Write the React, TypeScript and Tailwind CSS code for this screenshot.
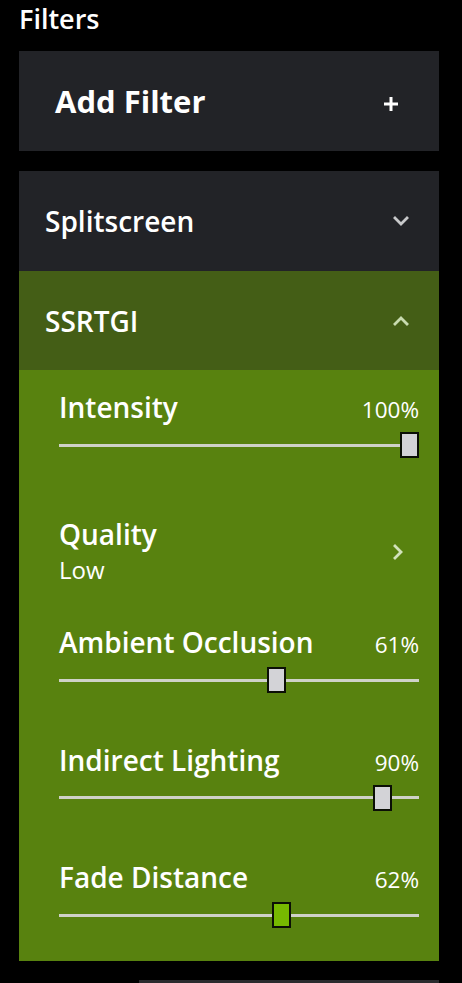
import type { ReactNode } from 'react'

const font = { fontFamily: '"Open Sans", "Noto Sans", sans-serif' }

type SliderRow = {
  label: string
  value: number
  pos?: number
  accent?: boolean
}

function Chevron({ dir }: { dir: 'up' | 'down' | 'right' }) {
  const d =
    dir === 'down'
      ? 'M2 2 L8 8 L14 2'
      : dir === 'up'
        ? 'M2 8 L8 2 L14 8'
        : 'M2 2 L8 8 L2 14'
  const w = dir === 'right' ? 10 : 16
  const h = dir === 'right' ? 16 : 10
  return (
    <svg width={w} height={h} viewBox={`0 0 ${w} ${h}`} fill="none">
      <path d={d} stroke="currentColor" strokeWidth="2.8" strokeLinecap="square" />
    </svg>
  )
}

function Slider({ label, value, pos, accent }: SliderRow) {
  const p = pos ?? value / 100
  return (
    <div className="h-[117.5px] pt-[21px] pl-[40px] pr-[20px]">
      <div className="flex items-baseline justify-between">
        <span className="text-[28px] leading-[32px] font-semibold text-white">{label}</span>
        <span className="text-[22.5px] leading-[32px] text-white">{value}%</span>
      </div>
      <div className="relative mt-[6px] h-[26px]">
        <div className="absolute left-0 right-0 top-[11.5px] h-[3px] bg-[#cfd2c8]" />
        <div
          className={
            'absolute top-0 h-[26px] w-[19px] border-2 border-[#0b0f06] ' +
            (accent ? 'bg-[#76b900]' : 'bg-[#d3d3d7]')
          }
          style={{ left: `calc(${p * 100}% - ${p * 19}px)` }}
        />
      </div>
    </div>
  )
}

function Card({ children, className }: { children: ReactNode; className: string }) {
  return <div className={'flex items-center justify-between ' + className}>{children}</div>
}

export default function App() {
  const rows: SliderRow[] = [
    { label: 'Ambient Occlusion', value: 61 },
    { label: 'Indirect Lighting', value: 90, pos: 0.92 },
    { label: 'Fade Distance', value: 62, pos: 0.625, accent: true },
  ]

  return (
    <div className="h-[983px] w-[462px] overflow-hidden bg-black" style={font}>
      <div className="pl-[19px] pr-[23px] pt-[1px]">
        <h1 className="text-[27px] leading-[36px] font-semibold text-white">Filters</h1>

        <Card className="mt-[14px] h-[100px] bg-[#222327] pl-[36px] pr-[40px]">
          <span className="text-[31px] font-bold text-white">Add Filter</span>
          <svg className="mt-[6px]" width="16" height="16" viewBox="0 0 16 16">
            <path d="M8 1 V15 M1 8 H15" stroke="white" strokeWidth="3" />
          </svg>
        </Card>

        <div className="mt-[20px]">
          <Card className="h-[100px] bg-[#222327] pl-[26px] pr-[30px] text-[#c7c8ca]">
            <span className="text-[28px] font-semibold text-white">Splitscreen</span>
            <Chevron dir="down" />
          </Card>
          <Card className="h-[99px] bg-[#445e16] pl-[26px] pr-[30px] text-[#c9dbb0]">
            <span className="text-[28px] font-semibold text-white">SSRTGI</span>
            <Chevron dir="up" />
          </Card>

          <div className="bg-[#58820f] pb-[3px]">
            <Slider label="Intensity" value={100} />
            <div className="flex h-[117.5px] justify-between pl-[40px] pr-[36px] pt-[30.5px] text-[#d2e2bb]">
              <div className="flex flex-col">
                <span className="text-[28px] leading-[32px] font-semibold text-white">Quality</span>
                <span className="mt-[5px] text-[24px] leading-[30px] text-white">Low</span>
              </div>
              <div className="mt-[26px]">
                <Chevron dir="right" />
              </div>
            </div>
            {rows.map((r) => (
              <Slider key={r.label} {...r} />
            ))}
          </div>
        </div>

        <div className="mt-[19px] ml-[120px] h-[3px] bg-[#2a2b2e]" />
      </div>
    </div>
  )
}
